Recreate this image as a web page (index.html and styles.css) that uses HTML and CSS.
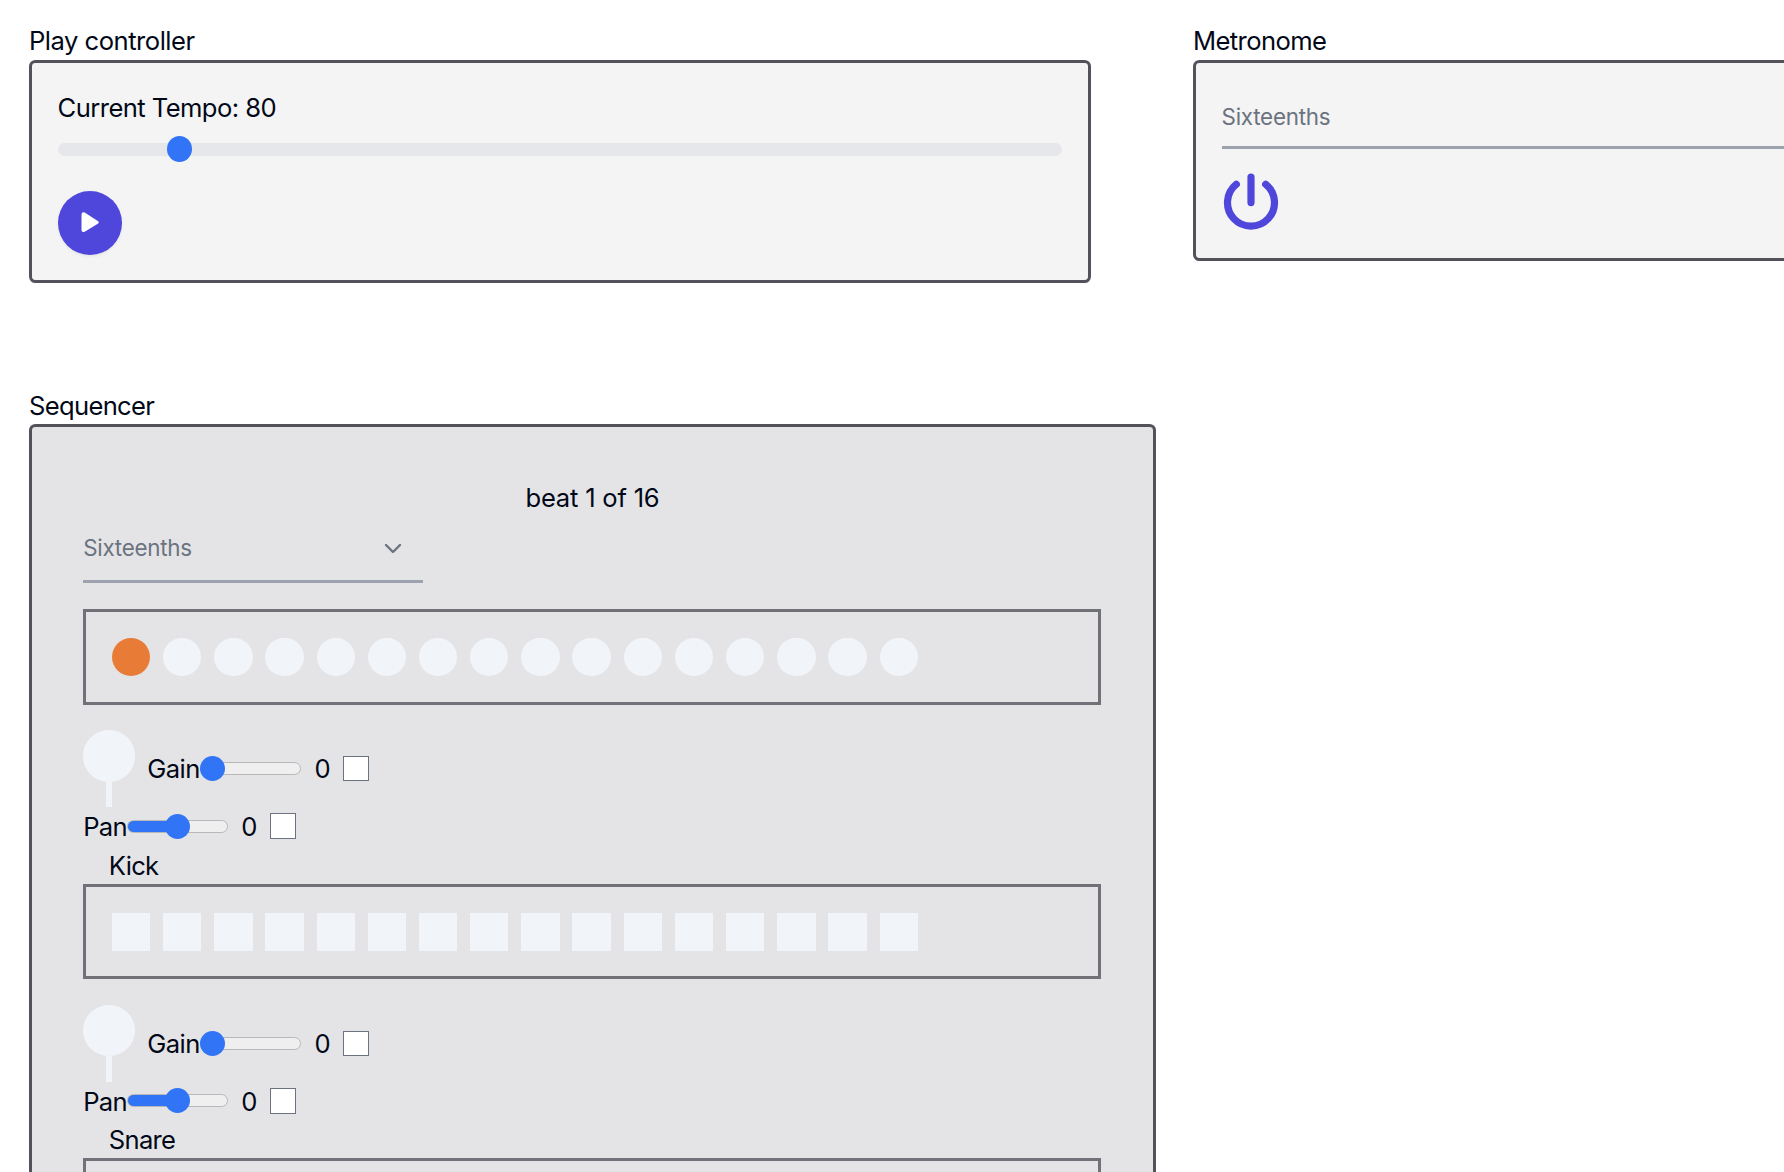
FILE: index.html
```
<!DOCTYPE html>
<html lang="en">
<head>
<meta charset="utf-8">
<title>Sequencer</title>
<link rel="stylesheet" href="styles.css">
</head>
<body>
<main class="page">
  <div class="top">
    <section class="panel">
      <h2 class="label"><span class="t-play">Play controller</span></h2>
      <div class="card card-play">
        <p class="text tempo-text"><span class="t-tempo">Current Tempo: 80</span></p>
        <div class="tempo"><i class="thumb"></i></div>
        <button class="play" aria-label="Play"><svg viewBox="0 0 64 64"><path d="M26.700 21.600L39.400 29.700Q42.200 31.300 39.400 32.900L26.700 40.700Q23.500 42 23.500 39V23.800Q23.500 20 26.700 21.600Z" fill="#fff"/></svg></button>
      </div>
    </section>
    <section class="panel">
      <h2 class="label"><span class="t-metro">Metronome</span></h2>
      <div class="card card-metro">
        <div class="select select-wide"><span class="t-six">Sixteenths</span></div>
        <svg class="power" viewBox="0 0 57.6 60" fill="none" stroke="#4f46dc" stroke-width="7.200" stroke-linecap="round"><path d="M29 5.200V30.600M14.300 12.300A23.500 23.500 0 1 0 43.700 12.300"/></svg>
      </div>
    </section>
  </div>
  <section class="sequencer">
    <h2 class="label low"><span class="t-seq">Sequencer</span></h2>
    <div class="board">
      <p class="text beat low"><span class="t-beat">beat 1 of 16</span></p>
      <div class="select select-seq"><span class="t-six">Sixteenths</span><svg class="chevron" viewBox="0 0 18 12" fill="none" stroke="#6b7280" stroke-width="2.400" stroke-linecap="round" stroke-linejoin="round"><path d="M2 2L9 9L16 2"/></svg></div>
      <div class="steps round"><i class="on"></i><i></i><i></i><i></i><i></i><i></i><i></i><i></i><i></i><i></i><i></i><i></i><i></i><i></i><i></i><i></i></div>
      <div class="track">
        <div class="row gain"><div class="knob"></div><span class="name t-gain">Gain</span><div class="slider"><i class="thumb"></i></div><span class="value">0</span><i class="check"></i></div>
        <div class="row pan"><span class="name t-pan">Pan</span><div class="slider half"><i class="thumb"></i></div><span class="value">0</span><i class="check"></i></div>
        <p class="text voice low"><span>Kick</span></p>
        <div class="steps"><i></i><i></i><i></i><i></i><i></i><i></i><i></i><i></i><i></i><i></i><i></i><i></i><i></i><i></i><i></i><i></i></div>
      </div>
      <div class="track">
        <div class="row gain"><div class="knob"></div><span class="name t-gain">Gain</span><div class="slider"><i class="thumb"></i></div><span class="value">0</span><i class="check"></i></div>
        <div class="row pan"><span class="name t-pan">Pan</span><div class="slider half"><i class="thumb"></i></div><span class="value">0</span><i class="check"></i></div>
        <p class="text voice low"><span>Snare</span></p>
        <div class="steps"><i></i><i></i><i></i><i></i><i></i><i></i><i></i><i></i><i></i><i></i><i></i><i></i><i></i><i></i><i></i><i></i></div>
      </div>
    </div>
  </section>
</main>
</body>
</html>
```
FILE: styles.css
```
* { box-sizing: border-box; margin: 0; padding: 0; }
body { height: 100vh; overflow: hidden; background: #fff; color: #020817; font: 400 25.6px/38.4px Inter, "Liberation Sans", sans-serif; letter-spacing: -0.5px; }
.page { display: flex; flex-direction: column; gap: 102px; padding: 21.6px 0 0 29px; height: 1172px; overflow: hidden; }
.top { display: grid; grid-template-columns: 1062px 1062px; column-gap: 102px; height: 262px; flex: none; }
.label { font-size: 25.6px; font-weight: 400; height: 38.4px; }
.card { border: 3px solid #52525b; border-radius: 6.4px; background: #f4f4f4; padding: 25.6px; }
.card-play { height: 223px; }
.card-metro { height: 201px; padding-top: 18px; }
.text { height: 38.4px; }
.low { padding-top: 1px; }
.t-tempo { letter-spacing: -0.57px; }
.t-metro { letter-spacing: -0.6px; }
.t-seq { letter-spacing: -0.68px; }
.t-beat { letter-spacing: -0.22px; }
.t-six { letter-spacing: -0.26px; }
.tempo { position: relative; height: 12.8px; margin-top: 16px; border-radius: 7px; background: #e5e7eb; }
.thumb { position: absolute; width: 25px; height: 25px; border-radius: 50%; background: #3274f6; left: 0; top: -7px; }
.tempo .thumb { left: 109px; top: -7px; height: 26px; }
.play { display: block; margin-top: 35px; width: 64px; height: 64px; border: 0; border-radius: 50%; background: #4f46dc; box-shadow: 0 1.6px 3.2px rgba(0,0,0,.06); }
.play svg { display: block; width: 64px; height: 64px; }
.select { display: flex; align-items: center; color: #6b7280; font-size: 22.4px; line-height: 32px; border-bottom: 3px solid #9ca3af; }
.select-wide { height: 68px; padding-top: 7px; }
.power { display: block; width: 57.6px; height: 60px; margin-top: 23.4px; }
.board { width: 1127px; height: 900px; border: 3px solid #52525b; border-radius: 6.4px; background: #e4e4e6; padding: 51.2px; }
.beat { text-align: center; }
.select-seq { width: 340px; height: 66.4px; justify-content: space-between; padding-right: 21px; }
.chevron { width: 18px; height: 12px; margin-top: 2px; }
.select-seq + .steps { margin-top: 25.8px; }
.steps { display: flex; gap: 12.8px; width: 1018px; height: 95.4px; padding: 25.6px; border: 3px solid #71717a; }
.steps i { width: 38.4px; height: 38.4px; background: #f1f5f9; }
.round { height: 96px; padding-top: 26px; }
.round i { border-radius: 50%; }
.steps .on { background: #e87c37; }
.track { padding-top: 25.6px; }
.row { display: flex; align-items: center; }
.gain { height: 76.8px; }
.pan { height: 38.4px; }
.knob { width: 52px; height: 76.8px; margin-right: 12px; display: flex; flex-direction: column; align-items: center; }
.knob::before { content: ""; width: 52px; height: 51.2px; border-radius: 50%; background: #f1f5f9; }
.knob::after { content: ""; width: 6px; height: 25.6px; background: #f1f5f9; }
.name, .value { padding-top: 1.6px; }
.t-gain { width: 53px; letter-spacing: -0.55px; }
.t-pan { width: 44.4px; margin-right: -0.8px; letter-spacing: -0.7px; }
.slider { position: relative; width: 101px; height: 13px; border: 1px solid #b8b8b8; border-radius: 7px; background: #efefef; }
.slider .thumb { left: -1px; top: -7px; }
.half { background: linear-gradient(90deg, #3274f6 50%, #efefef 50%); }
.slider.half .thumb { left: 37px; }
.value { width: 16px; margin-left: 13.4px; margin-right: 12.6px; }
.check { width: 26px; height: 26px; border: 1px solid #6b7280; background: #fff; }
.gain .check { height: 25px; }
.voice { padding-left: 25.6px; letter-spacing: -0.72px; }
```
